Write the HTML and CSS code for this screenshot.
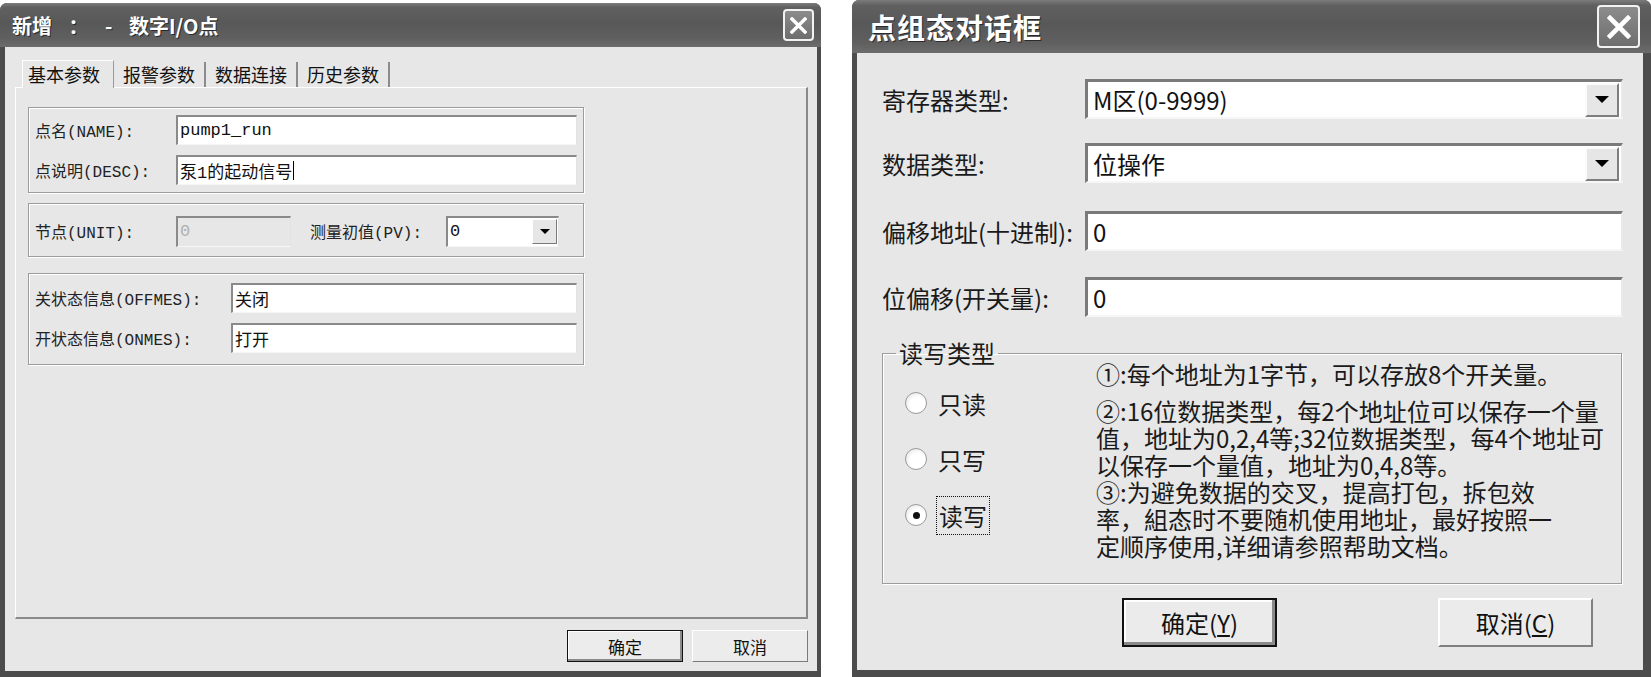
FILE: index.html
```html
<!DOCTYPE html>
<html lang="zh-CN">
<head>
<meta charset="UTF-8" />
<meta name="viewport" content="width=device-width, initial-scale=1" />
<title>点组态</title>
<link rel="stylesheet" href="styles.css">
</head>
<body>
  <!-- 新增数字I/O点 -->
  <div class="win win-io">
    <div class="titlebar">
      <span class="title">新增 ： - 数字I/O点</span>
      <span class="close-btn">
        <svg width="17" height="17" viewBox="0 0 17 17"><path d="M2 2L15 15M15 2L2 15" stroke="#fff" stroke-width="3.4" stroke-linecap="square"/></svg>
      </span>
    </div>
    <div class="client">
      <div class="tabs">
        <span class="tab active">基本参数</span>
        <span class="tab">报警参数</span>
        <span class="tab">数据连接</span>
        <span class="tab">历史参数</span>
      </div>
      <div class="tab-page">
        <div class="group g-name">
          <div class="row"><label class="lbl">点名(NAME):</label><div class="edit">pump1_run</div></div>
          <div class="row"><label class="lbl">点说明(DESC):</label><div class="edit">泵1的起动信号<span class="caret"></span></div></div>
        </div>
        <div class="group g-unit">
          <div class="row">
            <label class="lbl">节点(UNIT):</label>
            <div class="edit disabled">0</div>
            <label class="lbl lbl-pv">测量初值(PV):</label>
            <div class="combo-sm"><span class="val">0</span><span class="drop-sm"><i class="tri-sm"></i></span></div>
          </div>
        </div>
        <div class="group g-msg">
          <div class="row"><label class="lbl lbl-w">关状态信息(OFFMES):</label><div class="edit">关闭</div></div>
          <div class="row"><label class="lbl lbl-w">开状态信息(ONMES):</label><div class="edit">打开</div></div>
        </div>
      </div>
      <div class="buttons">
        <button class="btn default">确定</button>
        <button class="btn">取消</button>
      </div>
    </div>
  </div>

  <!-- 点组态对话框 -->
  <div class="win win-cfg">
    <div class="titlebar">
      <span class="title">点组态对话框</span>
      <span class="close-btn">
        <svg width="24" height="24" viewBox="0 0 24 24"><path d="M3 3L21 21M21 3L3 21" stroke="#fff" stroke-width="4.6" stroke-linecap="square"/></svg>
      </span>
    </div>
    <div class="client">
      <div class="frow">
        <label class="flbl">寄存器类型:</label>
        <div class="combo"><span class="val">M区(0-9999)</span><span class="drop"><i class="tri"></i></span></div>
      </div>
      <div class="frow r2">
        <label class="flbl">数据类型:</label>
        <div class="combo"><span class="val">位操作</span><span class="drop"><i class="tri"></i></span></div>
      </div>
      <div class="frow r3">
        <label class="flbl">偏移地址(十进制):</label>
        <div class="fedit">0</div>
      </div>
      <div class="frow r4">
        <label class="flbl">位偏移(开关量):</label>
        <div class="fedit">0</div>
      </div>

      <fieldset class="rw-group">
        <legend>读写类型</legend>
        <div class="rw-body">
          <div class="radios">
            <div class="radio"><span class="dot"></span><span>只读</span></div>
            <div class="radio"><span class="dot"></span><span>只写</span></div>
            <div class="radio"><span class="dot checked"></span><span class="focus">读写</span></div>
          </div>
          <div class="notes">
            <p class="n1">①:每个地址为1字节，可以存放8个开关量。</p>
            <p>②:16位数据类型，每2个地址位可以保存一个量<br>值，地址为0,2,4等;32位数据类型，每4个地址可<br>以保存一个量值，地址为0,4,8等。</p>
            <p>③:为避免数据的交叉，提高打包，拆包效<br>率，組态时不要随机使用地址，最好按照一<br>定顺序使用,详细请参照帮助文档。</p>
          </div>
        </div>
      </fieldset>

      <div class="dlg-buttons">
        <button class="btn-lg default">确定(<u>Y</u>)</button>
        <button class="btn-lg">取消(<u>C</u>)</button>
      </div>
    </div>
  </div>
</body>
</html>
```

FILE: styles.css
```css
body {
  margin: 0;
  width: 1651px;
  height: 677px;
  overflow: hidden;
  background: #fff;
  display: flex;
  align-items: flex-start;
  font-family: "Noto Sans CJK SC", sans-serif;
  color: #111;
}
.win {
  display: flex;
  flex-direction: column;
  background: #4c4c4c;
  border-radius: 7px 7px 0 0;
  box-sizing: border-box;
}
.win-io {
  width: 821px;
  height: 674px;
  margin-top: 3px;
}
.win-cfg {
  width: 799px;
  height: 677px;
  margin-left: 31px;
}
.titlebar {
  flex: none;
  display: flex;
  align-items: center;
  border-radius: 7px 7px 0 0;
  background: linear-gradient(#7c7c7c 0, #606060 10%, #585858 45%, #5f5f5f 80%, #6c6c6c 100%);
}
.win-io .titlebar {
  height: 44px;
  padding: 0 7px 0 12px;
}
.win-cfg .titlebar {
  height: 53px;
  padding: 0 11px 0 16px;
}
.title {
  color: #fff;
  font-weight: bold;
  white-space: pre;
  text-shadow: 1px 1px 0 #2a2a2a;
}
.win-io .title {
  font-size: 20px;
  word-spacing: 12px;
}
.win-cfg .title {
  font-size: 28px;
  letter-spacing: 1px;
}
.close-btn {
  margin-left: auto;
  display: flex;
  align-items: center;
  justify-content: center;
  box-sizing: border-box;
  border: 2px solid #f2f2f2;
  border-radius: 4px;
  background: linear-gradient(#8c8c8c, #6e6e6e);
}
.win-io .close-btn {
  width: 31px;
  height: 32px;
}
.win-cfg .close-btn {
  width: 43px;
  height: 43px;
}
.client {
  flex: 1;
  display: flex;
  flex-direction: column;
  background: #e7e7e7;
}

/* left dialog */
.win-io .client {
  margin: 0 4px 6px 5px;
  padding: 13px 9px 0 10px;
}
.tabs {
  display: flex;
  align-items: flex-end;
  height: 27px;
  padding-left: 7px;
}
.tab {
  height: 25px;
  line-height: 25px;
  font-size: 18px;
  padding: 0 9px;
  border-right: 2px solid #8c8c8c;
}
.tab.active {
  position: relative;
  z-index: 1;
  height: 28px;
  line-height: 27px;
  margin-bottom: -1px;
  padding: 0 13px 0 5px;
  background: #e7e7e7;
  border-left: 1px solid #fff;
  border-top: 1px solid #fff;
  border-right: 1px solid #9a9a9a;
  box-sizing: border-box;
}
.tab-page {
  flex: none;
  height: 532px;
  box-sizing: border-box;
  border-style: solid;
  border-width: 1px 2px 2px 1px;
  border-color: #fff #8a8a8a #8a8a8a #fff;
  padding: 19px 0 0 12px;
}
.group {
  width: 556px;
  box-sizing: border-box;
  border: 1px solid #9c9c9c;
  box-shadow: inset 1px 1px 0 #fff, 1px 1px 0 #fff;
  padding: 0 6px;
}
.g-name {
  height: 86px;
  padding-top: 7px;
}
.g-unit {
  height: 54px;
  margin-top: 10px;
  padding-top: 12px;
}
.g-msg {
  height: 92px;
  margin-top: 16px;
  padding-top: 9px;
}
.row {
  display: flex;
  align-items: center;
  height: 30px;
}
.row + .row {
  margin-top: 10px;
}
.lbl {
  flex: none;
  width: 141px;
  font-family: "Liberation Mono", "Noto Sans CJK SC", monospace;
  font-size: 16px;
  color: #222;
}
.lbl-w {
  width: 196px;
}
.lbl-pv {
  width: 136px;
  margin-left: 19px;
}
.edit {
  flex: 1;
  height: 30px;
  box-sizing: border-box;
  display: flex;
  align-items: center;
  padding-left: 2px;
  background: #fff;
  border-style: solid;
  border-width: 2px 1px 1px 2px;
  border-color: #8a8a8a #e2e2e2 #f6f6f6 #8a8a8a;
  font-family: "Liberation Mono", "Noto Sans CJK SC", monospace;
  font-size: 17px;
}
.edit.disabled {
  flex: none;
  width: 115px;
  height: 31px;
  background: #e7e7e7;
  color: #b0b0b0;
}
.caret {
  display: inline-block;
  width: 1px;
  height: 19px;
  margin-left: 1px;
  background: #000;
}
.combo-sm {
  flex: none;
  width: 113px;
  height: 31px;
  box-sizing: border-box;
  display: flex;
  align-items: center;
  background: #fff;
  border-style: solid;
  border-width: 2px 1px 1px 2px;
  border-color: #8a8a8a #e2e2e2 #f6f6f6 #8a8a8a;
  font-family: "Liberation Mono", monospace;
  font-size: 17px;
  padding-left: 2px;
}
.combo-sm .val {
  flex: 1;
}
.drop-sm {
  width: 25px;
  height: 25px;
  margin-right: 1px;
  box-sizing: border-box;
  display: flex;
  align-items: center;
  justify-content: center;
  background: #e6e6e6;
  border: 1px solid;
  border-color: #fff #7a7a7a #7a7a7a #fff;
}
.tri-sm {
  width: 0;
  height: 0;
  border-left: 5px solid transparent;
  border-right: 5px solid transparent;
  border-top: 5px solid #000;
}
.buttons {
  display: flex;
  justify-content: flex-end;
  gap: 9px;
  margin-top: 11px;
}
.btn {
  width: 116px;
  height: 32px;
  font-family: "Noto Sans CJK SC", sans-serif;
  font-size: 17px;
  color: #111;
  background: #ececec;
  border: 1px solid;
  border-color: #fff #7a7a7a #7a7a7a #fff;
  padding: 0;
}
.btn.default {
  border: 1px solid #111;
  box-shadow: inset -2px -2px 0 #8a8a8a, inset 1px 1px 0 #fff;
}

/* right dialog */
.win-cfg .client {
  margin: 0 8px 7px 5px;
  padding: 26px 20px 0 25px;
}
.frow {
  display: flex;
  align-items: center;
  height: 40px;
}
.r2 {
  margin-top: 24px;
}
.r3 {
  margin-top: 28px;
}
.r4 {
  margin-top: 26px;
}
.flbl {
  flex: none;
  width: 203px;
  font-size: 24px;
  color: #1a1a1a;
  white-space: nowrap;
}
.combo, .fedit {
  flex: 1;
  height: 40px;
  box-sizing: border-box;
  display: flex;
  align-items: center;
  background: #fff;
  border-style: solid;
  border-width: 3px 2px 2px 3px;
  border-color: #7a7a7a #eaeaea #f6f6f6 #7a7a7a;
  font-size: 24px;
  padding-left: 5px;
}
.combo .val {
  flex: 1;
}
.drop {
  width: 34px;
  height: 34px;
  margin-right: 2px;
  box-sizing: border-box;
  display: flex;
  align-items: center;
  justify-content: center;
  background: #e6e6e6;
  border: 2px solid;
  border-color: #fbfbfb #7e7e7e #7e7e7e #fbfbfb;
}
.tri {
  width: 0;
  height: 0;
  border-left: 7px solid transparent;
  border-right: 7px solid transparent;
  border-top: 7px solid #000;
}
.rw-group {
  margin: 25px 0 0 0;
  padding: 0;
  min-width: 0;
  width: 740px;
  box-sizing: border-box;
  border: 1px solid #9c9c9c;
  box-shadow: inset 1px 1px 0 #fff, 1px 1px 0 #fff;
}
.rw-group legend {
  margin-left: 13px;
  padding: 0 3px;
  font-size: 24px;
  line-height: 22px;
  color: #1a1a1a;
}
.rw-body {
  display: flex;
  height: 219px;
}
.radios {
  flex: none;
  width: 191px;
  padding: 11px 0 0 22px;
  display: flex;
  flex-direction: column;
}
.radio {
  height: 56px;
  display: flex;
  align-items: center;
  gap: 11px;
  font-size: 24px;
  color: #1a1a1a;
}
.dot {
  width: 22px;
  height: 22px;
  box-sizing: border-box;
  border-radius: 50%;
  border: 1px solid #9a9a9a;
  background: radial-gradient(circle at 60% 60%, #fff 45%, #dcdcdc 100%);
  display: flex;
  align-items: center;
  justify-content: center;
}
.dot.checked::after {
  content: "";
  width: 7px;
  height: 7px;
  border-radius: 50%;
  background: #111;
}
.focus {
  outline: 1px dotted #111;
  outline-offset: 1px;
  padding: 0 1px;
}
.notes {
  margin-top: -4px;
  font-size: 24px;
  line-height: 27px;
  white-space: nowrap;
  color: #1a1a1a;
}
.notes p {
  margin: 0;
}
.notes .n1 {
  margin-bottom: 10px;
}
.dlg-buttons {
  display: flex;
  gap: 161px;
  padding-left: 240px;
  margin-top: 14px;
}
.btn-lg {
  width: 155px;
  height: 49px;
  padding: 0;
  font-family: "Noto Sans CJK SC", sans-serif;
  font-size: 24px;
  color: #111;
  background: #ebebeb;
  border: 2px solid;
  border-color: #fff #808080 #808080 #fff;
}
.btn-lg.default {
  border: 2px solid #111;
  box-shadow: inset -3px -3px 0 #8a8a8a, inset 2px 2px 0 #fff;
}
```
